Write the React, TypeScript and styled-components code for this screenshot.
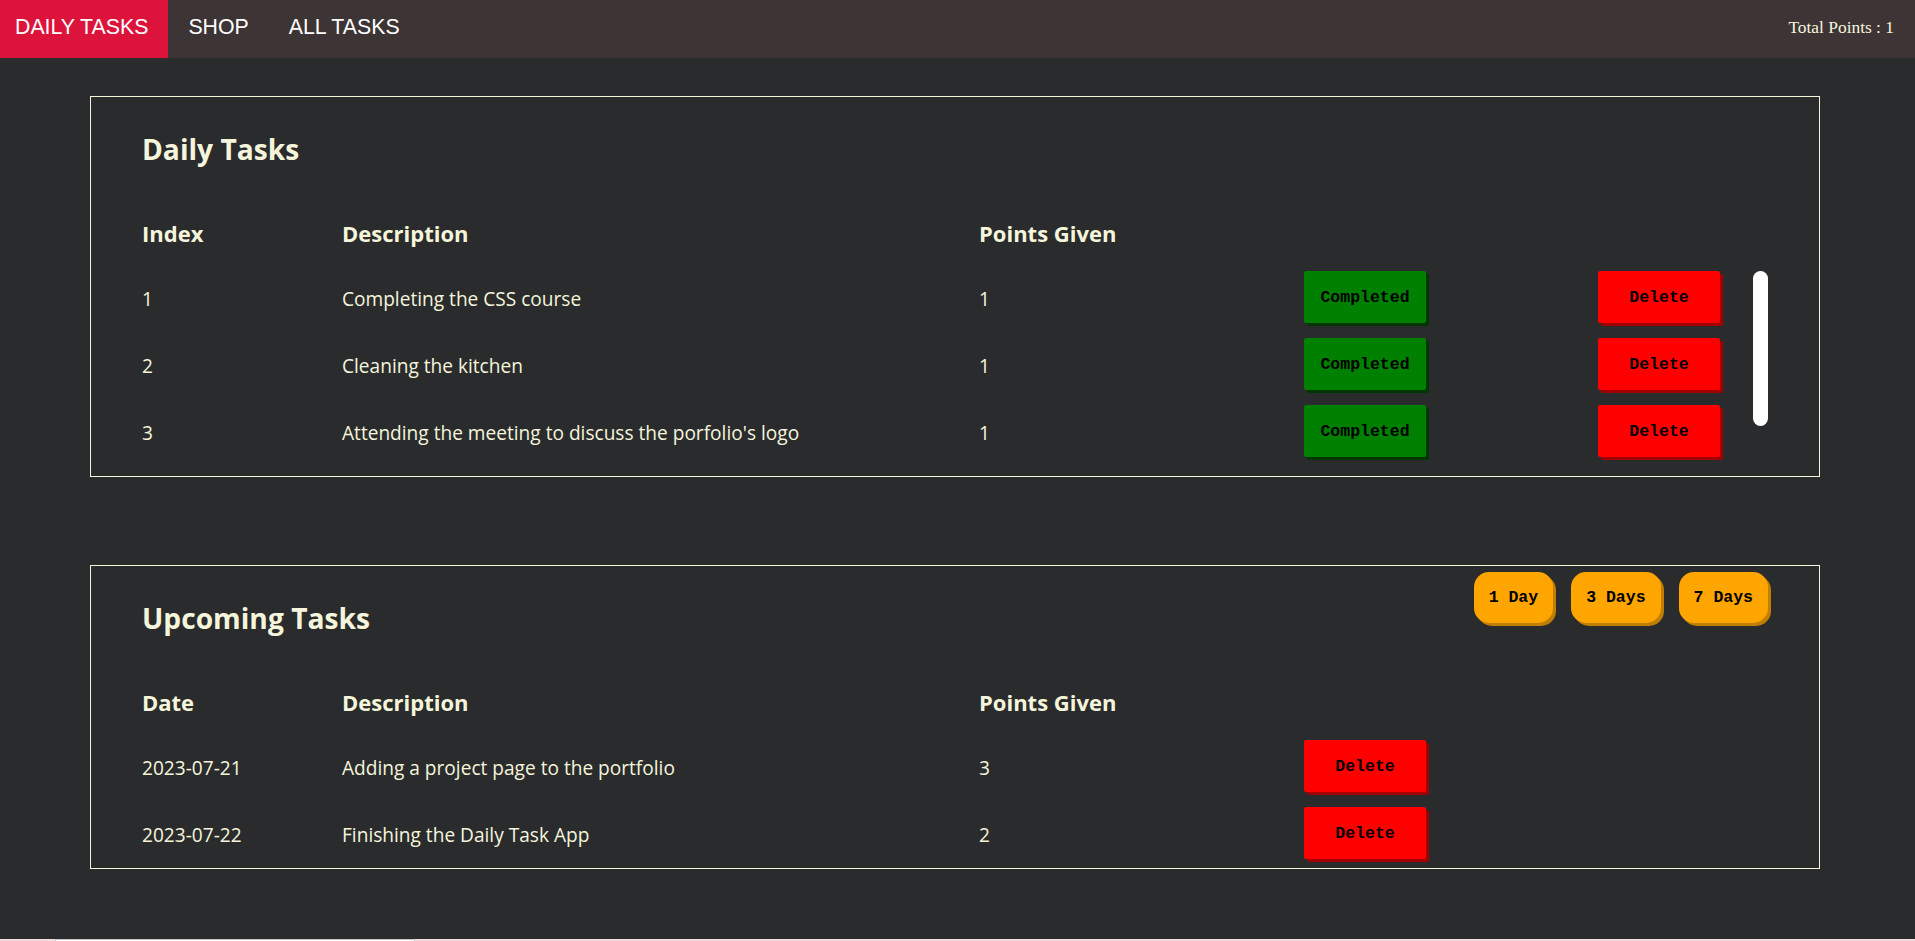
import React from 'react';
import styled, { createGlobalStyle } from 'styled-components';

const GlobalStyle = createGlobalStyle`
  html {
    scrollbar-width: none;
  }
  body {
    margin: 0;
    background-color: #2a2b2d;
    font-family: "Segoe UI", "Open Sans", sans-serif;
    color: #f5f5dc;
  }
`;

const NavBar = styled.nav`
  display: flex;
  align-items: stretch;
  height: 58px;
  background-color: #3d3436;
`;

const NavLinks = styled.div`
  display: flex;
  gap: 5px;
  flex: 1;
`;

const NavLink = styled.a<{ $active?: boolean }>`
  display: flex;
  align-items: center;
  padding: 0 20px 3px 15px;
  font-family: "Liberation Sans", Arial, sans-serif;
  font-size: 21.3px;
  color: #fff;
  text-decoration: none;
  background-color: ${p => (p.$active ? '#dc143c' : 'transparent')};
`;

const TotalPoints = styled.div`
  display: flex;
  align-items: center;
  padding: 0 21px 4px 0;
  font-family: "Liberation Serif", "Times New Roman", serif;
  font-size: 17.4px;
  color: #f5f5dc;
`;

const Main = styled.main`
  display: flex;
  flex-direction: column;
  gap: 88px;
  padding: 38px 95px 70px 90px;
`;

const Card = styled.section`
  border: 1px solid #f5f5dc;
  padding: 0 51px;
`;

const TitleRow = styled.div`
  display: flex;
  justify-content: space-between;
  align-items: flex-start;
`;

const Title = styled.h1`
  margin: 31px 0 30px;
  font-size: 28.2px;
  line-height: 42px;
  font-weight: 700;
`;

const DayButtons = styled.div`
  display: flex;
  gap: 18px;
  margin-top: 6px;
`;

const DayButton = styled.button`
  height: 51px;
  padding: 0 15px;
  border: none;
  border-radius: 15px;
  background-color: #ffa500;
  box-shadow: 3px 3px 0 #c07f00;
  font-family: "Liberation Mono", "Courier New", monospace;
  font-size: 16.5px;
  font-weight: 700;
  color: #000;
`;

const Row = styled.div<{ $height: number }>`
  display: grid;
  grid-template-columns: 200px 637px 325px 294px 1fr;
  align-items: center;
  height: ${p => p.$height}px;
`;

const HeadCell = styled.div`
  font-size: 22px;
  font-weight: 700;
`;

const Cell = styled.div`
  font-size: 19.1px;
`;

const TableBody = styled.div`
  display: flex;
  height: 207px;
  margin-bottom: 4px;
`;

const RowList = styled.div`
  flex: 1;
  overflow: hidden;
`;

const ScrollTrack = styled.div`
  width: 15px;
  padding-top: 6px;
`;

const ScrollThumb = styled.div`
  height: 155px;
  border-radius: 8px;
  background-color: #fff;
`;

const ActionButton = styled.button<{ $color: string; $shade: string }>`
  display: block;
  width: 122px;
  height: 52px;
  margin-bottom: 3px;
  border: none;
  border-radius: 2px;
  background-color: ${p => p.$color};
  box-shadow: 3px 3px 0 ${p => p.$shade};
  font-family: "Liberation Mono", "Courier New", monospace;
  font-size: 16.5px;
  font-weight: 700;
  color: #000;
  cursor: pointer;
`;

const Footer = styled.footer`
  height: 60px;
  padding-left: 55px;
  background-color: #f4dcde;
`;

const FooterBox = styled.div`
  width: 358px;
  height: 40px;
  border: 1px solid #c8c8c8;
  background-color: #fff;
`;

const dailyTasks = [
  { index: 1, description: 'Completing the CSS course', points: 1 },
  { index: 2, description: 'Cleaning the kitchen', points: 1 },
  { index: 3, description: "Attending the meeting to discuss the porfolio's logo", points: 1 },
];

const upcomingTasks = [
  { date: '2023-07-21', description: 'Adding a project page to the portfolio', points: 3 },
  { date: '2023-07-22', description: 'Finishing the Daily Task App', points: 2 },
];

const CompletedButton = () => (
  <ActionButton $color="#008000" $shade="#013601">Completed</ActionButton>
);

const DeleteButton = () => (
  <ActionButton $color="#ff0000" $shade="#a30000">Delete</ActionButton>
);

const App: React.FC = () => {
  return (
    <>
      <GlobalStyle />
      <NavBar>
        <NavLinks>
          <NavLink href="#" $active>DAILY TASKS</NavLink>
          <NavLink href="#">SHOP</NavLink>
          <NavLink href="#">ALL TASKS</NavLink>
        </NavLinks>
        <TotalPoints>Total Points : 1</TotalPoints>
      </NavBar>

      <Main>
        <Card>
          <TitleRow>
            <Title>Daily Tasks</Title>
          </TitleRow>
          <Row $height={65}>
            <HeadCell>Index</HeadCell>
            <HeadCell>Description</HeadCell>
            <HeadCell>Points Given</HeadCell>
          </Row>
          <TableBody>
            <RowList>
              {dailyTasks.map(task => (
                <Row $height={67} key={task.index}>
                  <Cell>{task.index}</Cell>
                  <Cell>{task.description}</Cell>
                  <Cell>{task.points}</Cell>
                  <div><CompletedButton /></div>
                  <div><DeleteButton /></div>
                </Row>
              ))}
            </RowList>
            <ScrollTrack>
              <ScrollThumb />
            </ScrollTrack>
          </TableBody>
        </Card>

        <Card>
          <TitleRow>
            <Title>Upcoming Tasks</Title>
            <DayButtons>
              <DayButton>1 Day</DayButton>
              <DayButton>3 Days</DayButton>
              <DayButton>7 Days</DayButton>
            </DayButtons>
          </TitleRow>
          <Row $height={65}>
            <HeadCell>Date</HeadCell>
            <HeadCell>Description</HeadCell>
            <HeadCell>Points Given</HeadCell>
          </Row>
          {upcomingTasks.map(task => (
            <Row $height={67} key={task.date}>
              <Cell>{task.date}</Cell>
              <Cell>{task.description}</Cell>
              <Cell>{task.points}</Cell>
              <div><DeleteButton /></div>
            </Row>
          ))}
        </Card>
      </Main>

      <Footer>
        <FooterBox />
      </Footer>
    </>
  );
};

export default App;
